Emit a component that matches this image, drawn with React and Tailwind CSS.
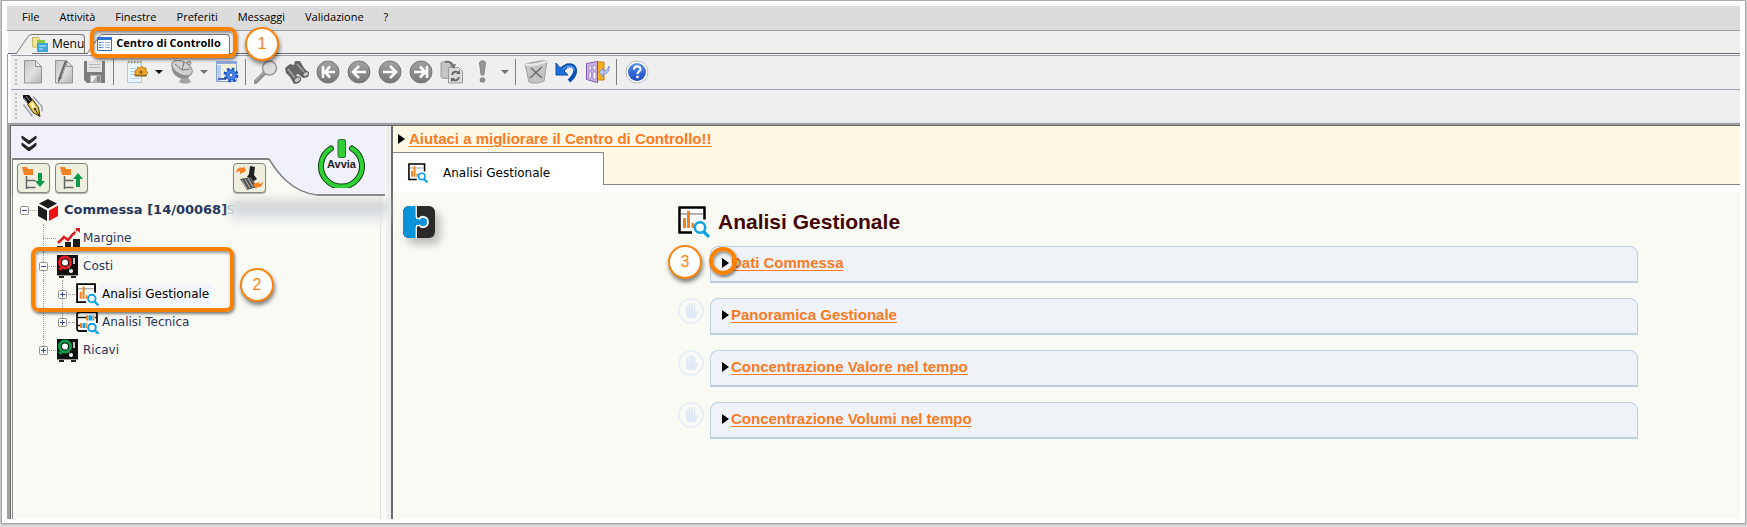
import React from 'react';

const menuItems = ['File', 'Attività', 'Finestre', 'Preferiti', 'Messaggi', 'Validazione', '?'];

const sections = [
    { title: 'Dati Commessa', hand: false },
    { title: 'Panoramica Gestionale', hand: true },
    { title: 'Concentrazione Valore nel tempo', hand: true },
    { title: 'Concentrazione Volumi nel tempo', hand: true }
];

/* ---------- Toolbar icons ---------- */

const GreyDefs = () => (
    <svg width="0" height="0" className="absolute" aria-hidden="true">
        <defs>
            <linearGradient id="greyPage" x1="0" y1="0" x2="1" y2="1">
                <stop offset="0" stopColor="#c2c2c2" />
                <stop offset="0.5" stopColor="#e2e2e2" />
                <stop offset="1" stopColor="#b4b4b4" />
            </linearGradient>
            <linearGradient id="greyBall" x1="0" y1="0" x2="0" y2="1">
                <stop offset="0" stopColor="#a2a2a2" />
                <stop offset="1" stopColor="#777777" />
            </linearGradient>
            <linearGradient id="blueBall" x1="0" y1="0" x2="0" y2="1">
                <stop offset="0" stopColor="#5b8fe8" />
                <stop offset="1" stopColor="#1a49c4" />
            </linearGradient>
        </defs>
    </svg>
);

const NewIcon = () => (
    <svg width="20" height="24" viewBox="0 0 20 24">
        <path d="M1.5 .5h11l6 6v16.500h-17z" fill="url(#greyPage)" stroke="#959595" />
        <path d="M12.500 .5v6h6z" fill="#eee" stroke="#959595" />
    </svg>
);

const EditIcon = () => (
    <svg width="20" height="24" viewBox="0 0 20 24">
        <path d="M1.5 .5h11l6 6v16.500h-17z" fill="url(#greyPage)" stroke="#959595" />
        <path d="M12.500 .5v6h6z" fill="#ddd" stroke="#959595" />
        <path d="M12 1.500 6 18" stroke="#6c6c6c" strokeWidth="3" />
        <path d="M12.500 3 7.500 17" stroke="#b5b5b5" />
        <path d="m4.500 17 3 1-3.500 5z" fill="#666" />
    </svg>
);

const SaveIcon = () => (
    <svg width="22" height="24" viewBox="0 0 22 24">
        <path d="M0 1h21v22H3l-3-3z" fill="#7c7c7c" />
        <path d="M3 1h15v11H3z" fill="#e2e2e2" />
        <path d="M5 4.500h11M5 7.500h11" stroke="#b9b9b9" />
        <path d="M6 15h11v8H6z" fill="#b3b3b3" />
        <path d="M7 16h6l-5 6H7z" fill="#efefef" />
        <path d="M13 16h3v6h-3z" fill="#8c8c8c" />
    </svg>
);

const NoteGearIcon = () => (
    <svg width="22" height="24" viewBox="0 0 22 24">
        <path d="M1.500 2.500h14v20h-14z" fill="#eaf5fd" stroke="#a9cde8" />
        <path d="M4 8.500h6M4 11.500h5M4 14.500h5M4 18.500h9" stroke="#b6d2ea" />
        <path d="M2 2h14" stroke="#a79f78" strokeWidth="2.500" strokeDasharray="1.500 1.500" />
        <path d="m9 11 2-1 1-3 2 1 2-2 1 2 3 0 0 3 2 2-2 1v2H9z" fill="#eda72a" stroke="#c07c15" />
        <circle cx="15" cy="12" r="1.500" fill="#8c5a10" />
        <path d="M9 15.500h12" stroke="#8a6b2c" strokeWidth="1.500" />
    </svg>
);

const DishIcon = () => (
    <svg width="24" height="24" viewBox="0 0 24 24">
        <path d="M12 17h6l3 5c-3 2-9 2-12 0z" fill="#a4a4a4" />
        <path d="M2 4C0 12 7 21 17 18c4-2 6-6 5-9z" fill="#8e8e8e" />
        <ellipse cx="12" cy="8" rx="11" ry="6.500" transform="rotate(28 12 8)" fill="#d0d0d0" stroke="#8b8b8b" />
        <path d="M5 4l7 6 2-8M12 10l8-1" stroke="#777" fill="none" />
        <circle cx="19" cy="3" r="2" fill="#bdbdbd" stroke="#8a8a8a" />
    </svg>
);

const WindowGearIcon = () => (
    <svg width="24" height="24" viewBox="0 0 24 24">
        <path d="M1.500 1.500h20v20h-20z" fill="#f3f0dc" stroke="#8ea4cf" />
        <path d="M1 1h21v3H1z" fill="#90a9dc" />
        <path d="M2 5h4v16H2z" fill="#b7cdf2" />
        <path d="M3 19h8" stroke="#4d6fb5" strokeWidth="2" />
        <circle cx="16" cy="15" r="6" fill="none" stroke="#1c58c9" strokeWidth="3" strokeDasharray="2.600 2.100" />
        <circle cx="16" cy="15" r="5" fill="#4a86ec" stroke="#1c58c9" />
        <circle cx="16" cy="15" r="2" fill="#fff" stroke="#1c58c9" />
    </svg>
);

const SearchIcon = () => (
    <svg width="24" height="24" viewBox="0 0 24 24">
        <path d="m10.500 13-9 9" stroke="#8d8d8d" strokeWidth="4" strokeLinecap="round" />
        <path d="m9.500 13-8 8" stroke="#b9b9b9" />
        <circle cx="15.500" cy="8" r="7" fill="#dedede" stroke="#999" strokeWidth="1.500" />
        <path d="M11 7c1-3 4-4 6-3" stroke="#f6f6f6" strokeWidth="1.500" fill="none" />
    </svg>
);

const BinocularsIcon = () => (
    <svg width="24" height="24" viewBox="0 0 24 24">
        <path d="M0 8 5 4l4 1 1-4 5 0 4 7 5 5-1 4-5 1-5-4-2 1 5 5-2 3-5 1-4-7-4-4z" fill="#666" />
        <path d="m3 9 7 9M12 4l7 8" stroke="#a5a5a5" strokeWidth="1.500" />
        <ellipse cx="12.500" cy="20" rx="3.500" ry="2.500" transform="rotate(-35 12 20)" fill="#c4c4c4" stroke="#5d5d5d" />
        <ellipse cx="20.500" cy="14.500" rx="3" ry="2.300" transform="rotate(-35 20 14)" fill="#c4c4c4" stroke="#5d5d5d" />
    </svg>
);

const BallIcon = ({ children }) => (
    <svg width="24" height="24" viewBox="0 0 24 24">
        <circle cx="12" cy="12" r="11" fill="url(#greyBall)" stroke="#777" />
        <g stroke="#fff" strokeWidth="2.600" fill="none">{children}</g>
    </svg>
);

const PageRefreshIcon = () => (
    <svg width="24" height="24" viewBox="0 0 24 24">
        <path d="M1 3c0-2 9-2 10 0v14c-1 2-9 2-10 0z" fill="#c5c5c5" stroke="#9e9e9e" />
        <path d="M8.500 7.500h10l4 4v11.500h-14z" fill="#dadada" stroke="#9a9a9a" />
        <path d="M5 2c5-1 7 1 8 4" stroke="#747474" strokeWidth="2" fill="none" />
        <path d="m10 5 6-1-2 5z" fill="#747474" />
        <path d="M12 15c1-4 5-4 7-2M19 17c-1 4-5 4-7 2" stroke="#666" strokeWidth="1.800" fill="none" />
        <path d="M20 10v4h-4zM11 22v-4h4z" fill="#666" />
    </svg>
);

const ExclamationIcon = () => (
    <svg width="10" height="24" viewBox="0 0 10 24">
        <path d="M1.500 3c0-3 6-3 6 0L5.800 15H3.200z" fill="#979797" stroke="#858585" />
        <circle cx="4.500" cy="20" r="2.800" fill="#8d8d8d" />
    </svg>
);

const TrashIcon = () => (
    <svg width="24" height="24" viewBox="0 0 24 24">
        <path d="M1 4c6-1 15-4 22-3l-3 20c-4 2-11 3-15 1z" fill="#c5c5c5" stroke="#a0a0a0" />
        <path d="M1 4c6 2 15 0 22-3" stroke="#e8e8e8" strokeWidth="2" fill="none" />
        <path d="m7 8 11 10M18 7 6 18" stroke="#6b6b6b" strokeWidth="1.500" />
    </svg>
);

const UndoIcon = () => (
    <svg width="23" height="24" viewBox="0 0 23 24">
        <path d="M6 10c7-8 15-5 14 2-.4 4-3 6-6 9" stroke="#0b4fae" strokeWidth="4" fill="none" />
        <path d="M1 3v12h12l-4-4 3-3-4-1-3 1z" fill="#1b6fd6" stroke="#0b4fae" />
        <path d="M8 9c5-5 12-3 11 2" stroke="#4f9df0" strokeWidth="1.500" fill="none" />
    </svg>
);

const ExitIcon = () => (
    <svg width="25" height="24" viewBox="0 0 25 24">
        <path d="M11 2h8v18h-8z" fill="#fbb11c" stroke="#c77f15" />
        <path d="m1.500 3.500 11-2v21l-11-3z" fill="#c9b3e6" stroke="#7c58ad" />
        <path d="M4 6h2.500v4H4zM8 5.500h3V10H8zM4 12h2.500v6H4zM8 12h3v7H8z" fill="#fff" stroke="#9a7cc6" strokeWidth=".8" />
        <path d="M24 6c1 5-2 8-6 8v3l-4-5 4-4v3c3 0 5-2 6-5z" fill="#b9c6f5" stroke="#6e83cc" strokeWidth=".8" />
    </svg>
);

const HelpIcon = () => (
    <svg width="24" height="24" viewBox="0 0 24 24">
        <circle cx="12" cy="12" r="11" fill="#fff" stroke="#b8bfcd" />
        <circle cx="12" cy="12" r="9" fill="url(#blueBall)" />
        <path d="M9 9.500c0-4 6.500-4 6.500-.5 0 2.500-3 2.300-3 5" stroke="#fff" strokeWidth="2.200" fill="none" />
        <circle cx="12.500" cy="17" r="1.400" fill="#fff" />
    </svg>
);

const PenIcon = () => (
    <svg width="22" height="24" viewBox="0 0 22 24">
        <path d="m1.500 10.500 9 12M11 2.500l9 10v5" stroke="#98a0b0" strokeWidth="1.500" fill="none" />
        <path d="M1 1h6l4 5-5 4-5-6z" fill="#151515" />
        <path d="m4 2 4 5M2 4l3 4" stroke="#8c8c8c" />
        <path d="m5.500 10.500 5-5 6 8 1.500 9-7-4z" fill="#e6bf45" stroke="#3c2f0a" />
        <path d="m8 10 2.500-2 4 6v3l-3-1z" fill="#fff3b8" />
        <path d="m12.500 14.500 5 7.500" stroke="#3c2f0a" />
        <circle cx="13" cy="15" r="1.300" fill="#3c2f0a" />
    </svg>
);

/* ---------- Toolbar pieces ---------- */

const ToolButton = ({ label, children }) => (
    <button type="button" aria-label={label} className="w-[31px] h-8 flex items-center justify-center">
        {children}
    </button>
);

const Caret = ({ label, active }) => (
    <button type="button" aria-label={label} className="w-3.5 h-8 flex items-center justify-center">
        <svg width="8" height="4" viewBox="0 0 8 4">
            <path d="M0 0h8L4 4z" fill={active ? '#111' : '#707070'} />
        </svg>
    </button>
);

const Separator = () => <span className="w-px h-[26px] ml-[3px] mr-1 bg-[#808080]" />;

const Grip = () => (
    <span className="w-0.5 h-[26px] border-l-2 border-dotted border-[#bdbdbd]" />
);

const BarArrow = ({ d }) => (
    <BallIcon>
        <path d={d} />
    </BallIcon>
);

const Toolbar = () => (
    <div role="toolbar" className="ml-[3px] pl-1 pb-0.5 h-[34px] flex items-center border-t border-[#9a9aa6] bg-[#efefef]">
        <Grip />
        <ToolButton label="Nuovo"><NewIcon /></ToolButton>
        <ToolButton label="Modifica"><EditIcon /></ToolButton>
        <ToolButton label="Salva"><SaveIcon /></ToolButton>
        <Separator />
        <div className="flex ml-[3px]">
            <ToolButton label="Azioni"><NoteGearIcon /></ToolButton>
            <Caret label="Altre azioni" active />
            <ToolButton label="Ricezione"><DishIcon /></ToolButton>
            <Caret label="Altre ricezioni" />
            <ToolButton label="Impostazioni"><WindowGearIcon /></ToolButton>
        </div>
        <Separator />
        <ToolButton label="Cerca"><SearchIcon /></ToolButton>
        <ToolButton label="Trova"><BinocularsIcon /></ToolButton>
        <ToolButton label="Primo"><BarArrow d="M7 6v12M19 12H10M14 6.500 8.800 12l5.200 5.500" /></ToolButton>
        <ToolButton label="Precedente"><BarArrow d="M19 12H7M12 6l-6 6 6 6" /></ToolButton>
        <ToolButton label="Successivo"><BarArrow d="M5 12h12M12 6l6 6-6 6" /></ToolButton>
        <ToolButton label="Ultimo"><BarArrow d="M18 6v12M5 12h10M11 6.500l5.200 5.500-5.200 5.500" /></ToolButton>
        <ToolButton label="Aggiorna"><PageRefreshIcon /></ToolButton>
        <ToolButton label="Avvisi"><ExclamationIcon /></ToolButton>
        <Caret label="Altri avvisi" />
        <Separator />
        <ToolButton label="Elimina"><TrashIcon /></ToolButton>
        <ToolButton label="Annulla"><UndoIcon /></ToolButton>
        <ToolButton label="Esci"><ExitIcon /></ToolButton>
        <Separator />
        <ToolButton label="Aiuto"><HelpIcon /></ToolButton>
    </div>
);

/* ---------- Shared drawings ---------- */

const AnalysisIcon = ({ size }) => (
    <svg width={size} height={size} viewBox="0 0 32 32" className="shrink-0">
        <path d="M1.200 1.200h25v25h-25z" fill="#fff" />
        <path d="M14 26.500H1.500v-25h25v12" fill="none" stroke="#000" strokeWidth="2.500" />
        <path d="M3 8h22" stroke="#999" strokeWidth="1.500" />
        <path d="M5 12h3v10H5zM9 5h3v17H9zM13.500 17h2.500v5h-2.500z" fill="#f58220" />
        <circle cx="22" cy="21.500" r="5.200" fill="#fff" stroke="#0da3e6" strokeWidth="2.600" />
        <path d="m25.500 25.500 5.500 5.500" stroke="#0da3e6" strokeWidth="3.200" />
    </svg>
);

const TechIcon = () => (
    <svg width="23" height="23" viewBox="0 0 23 23" className="shrink-0">
        <path d="M11 20H3c-1 0-2-1-2-2V4c0-2 1-3 3-3h15c1 0 2 1 2 2v9" fill="#fff" stroke="#111" strokeWidth="1.800" />
        <path d="M1 6.500h9M19 6.500h2M1 14.500h3" stroke="#111" strokeWidth="1.500" />
        <path d="M10 4.500h2v5h-2zM17 4.500h1.500v5H17zM4 12h2v5H4zM10 12h1v5h-1z" fill="#f58220" />
        <path d="M12.500 4.500h4v5h-4zM6.500 12h3v5h-3z" fill="#0da3e6" />
        <circle cx="16" cy="16.500" r="3.800" fill="#fff" stroke="#0da3e6" strokeWidth="2" />
        <path d="m18.500 19 4 4" stroke="#0da3e6" strokeWidth="2.400" />
    </svg>
);

const CubeIcon = () => (
    <svg width="20" height="22" viewBox="0 0 20 22" className="shrink-0">
        <path d="m10 0 9 4.500-9 5-9-5z" fill="#1c1c1c" />
        <path d="m0 6.500 9 5V22l-9-5z" fill="#1c1c1c" />
        <path d="m20 6.500-9 5V22l9-5z" fill="#ee1111" />
    </svg>
);

const MarginIcon = () => (
    <svg width="24" height="23" viewBox="0 0 24 23" className="shrink-0">
        <path d="M0 19h6v4H0zM8 15h6v8H8zM16 12h7v11h-7z" fill="#1c1c1c" />
        <path d="m1 16 6-6 4 3 5-6 2-1" fill="none" stroke="#e21b22" strokeWidth="2.600" />
        <path d="m17 6 4-4" stroke="#e21b22" strokeWidth="2" strokeDasharray="2 1" />
        <path d="M18 1h5v5z" fill="#e21b22" />
    </svg>
);

const SafeIcon = ({ color }) => (
    <svg width="21" height="23" viewBox="0 0 21 23" className="shrink-0">
        <path d="M0 0h21v21H0z" fill="#111" />
        <path d="M2 21h5v2H2zM14 21h5v2h-5z" fill="#222" />
        <circle cx="8" cy="7.500" r="5.500" fill="none" stroke={color} strokeWidth="3" />
        <path d="m7 12-6 1 3 3z" fill={color} />
        <circle cx="8" cy="7.500" r="3" fill="#fff" />
        <path d="M17 3v6" stroke="#fff" strokeWidth="1.500" />
        <circle cx="14" cy="16" r="2" fill="#fff" />
        <path d="m10 10 4 5" stroke="#777" />
        <path d="M0 20.500h21" stroke="#999" />
    </svg>
);

const HandIcon = () => (
    <svg width="26" height="26" viewBox="0 0 26 26">
        <circle cx="13" cy="13" r="12" fill="none" stroke="#e8eff6" strokeWidth="2" />
        <path
            d="M8 13V7.500h1.800V12h.6V5.500h2V12h.6V5h2v7h.6V6.500h1.800V15l1.600-2.500 1.600.8-3 7h-7.600L8 17z"
            fill="#e2ebf5"
        />
    </svg>
);

const Triangle = () => (
    <svg width="7" height="10" viewBox="0 0 7 10" className="shrink-0">
        <path d="M0 0l7 5-7 5z" fill="#000" />
    </svg>
);

const PuzzleLogo = () => (
    <svg width="32" height="32" viewBox="0 0 32 32" className="drop-shadow-[5px_6px_4px_rgba(0,0,0,0.25)]">
        <rect width="32" height="32" rx="6" fill="#2b2a29" />
        <path
            d="M13 0v10c0 2 2 4 3.500 2.500 2-3 8.500-2 8.500 3.500s-6.500 6.500-8.500 3.500C15 18 13 20 13 22v10"
            fill="#0a93d8"
            stroke="#fff"
            strokeWidth="1.800"
        />
        <path d="M6 0h6.500v32H6a6 6 0 0 1-6-6V6a6 6 0 0 1 6-6z" fill="#0a93d8" />
        <path d="M11 13h5v6h-5z" fill="#0a93d8" />
    </svg>
);

const StepBadge = ({ number, className }) => (
    <span
        className={`absolute z-20 w-[34px] h-[34px] rounded-full border-2 border-[#f98510] bg-white flex items-center justify-center font-['Liberation_Sans',sans-serif] text-base text-[#f98510] shadow-[1px_3px_4px_rgba(0,0,0,0.5)] ${className}`}
    >
        {number}
    </span>
);

const Highlight = ({ className }) => (
    <span
        className={`absolute z-10 border-4 border-[#fb8200] pointer-events-none shadow-[1px_2px_3px_rgba(0,0,0,0.5),inset_1px_2px_3px_rgba(0,0,0,0.4)] ${className}`}
    />
);

/* ---------- Window tabs ---------- */

const WindowTab = ({ active, icon, children, className }) => (
    <button type="button" className={`h-5 flex items-stretch ${className}`}>
        <svg width="16" height="20" viewBox="0 0 16 20" className="shrink-0">
            <path d="M0 20C5 16 9 4 13 1l3-.5V20z" fill={active ? '#fff' : '#efefef'} />
            <path d="M0 20 12 2.500Q13.500 .5 16 .5" fill="none" stroke="#777" />
        </svg>
        <span className={`flex items-center gap-1 pb-0.5 border-t border-r border-[#777] rounded-tr-sm ${active ? 'bg-white text-[11px] font-bold pr-2' : 'text-xs'}`}>
            {icon}
            {children}
        </span>
    </button>
);

const MenuTabIcon = () => (
    <svg width="16" height="16" viewBox="0 0 16 16">
        <path d="M.5 1.500h6l1 1.500v8h-7z" fill="#f1e3a0" stroke="#c5b660" />
        <path d="M5 4h8v6H5z" fill="#8cc63f" />
        <path d="M5 7h11v9H5z" fill="#3ba5d8" />
        <path d="M7 10h7M7 13h4" stroke="#d6effa" />
    </svg>
);

const ListTabIcon = () => (
    <svg width="15" height="14" viewBox="0 0 15 14" className="-ml-1.5 self-center">
        <path d="M.5 .5h14v13H.5z" fill="#fff" stroke="#2a74d4" />
        <path d="M0 0h15v3H0z" fill="#2a74d4" />
        <path d="M2 5.500h2M2 8h2M2 10.500h2M8.500 5.500h1M8.500 8h1M8.500 10.500h1" stroke="#2a74d4" />
        <path d="M4 5.500h3M4 8h3M4 10.500h3M10 5.500h3M10 8h3M10 10.500h3" stroke="#7db0ee" />
    </svg>
);

/* ---------- Tree ---------- */

const Expander = ({ sign }) => (
    <svg width="9" height="9" viewBox="0 0 9 9" className="absolute left-0 top-[10px]">
        <rect x=".5" y=".5" width="8" height="8" rx="1" fill="#fff" stroke="#919191" />
        <path d={sign === 'plus' ? 'M2 4.500h5M4.500 2v5' : 'M2 4.500h5'} stroke="#31479c" />
    </svg>
);

const Branch = ({ line, sign, arm = true }) => (
    <span className="relative w-[19px] h-7 shrink-0">
        {line === 'full' && <span className="absolute left-1 top-0 h-7 border-l border-dotted border-[#9a9a9a]" />}
        {line === 'half' && <span className="absolute left-1 top-0 h-3.5 border-l border-dotted border-[#9a9a9a]" />}
        {arm && <span className="absolute left-1 top-3.5 w-[13px] border-t border-dotted border-[#9a9a9a]" />}
        {sign && <Expander sign={sign} />}
    </span>
);

const TreeRow = ({ branches, icon, children }) => (
    <li className="h-7 flex items-center">
        {branches}
        <span className="-ml-px shrink-0">{icon}</span>
        {children}
    </li>
);

const Spacer = () => <span className="w-[19px] shrink-0" />;

const Tree = () => (
    <div className="relative pl-[7px]">
        <ul className="font-['DejaVu_Sans',sans-serif] text-xs text-[#26365c]">
            <TreeRow branches={<Branch sign="minus" />} icon={<CubeIcon />}>
                <a href="#commessa" className="ml-1.5 text-[13px] font-bold whitespace-nowrap">Commessa [14/00068]</a>
                <span className="-mr-1 text-[#9aa7b5]">S</span>
                <span className="flex-1 h-5 -mr-2 bg-gradient-to-b from-[#c9cdce] to-[#e6e9ec] blur-[5px]" />
            </TreeRow>
            <TreeRow branches={<><Spacer /><Branch line="full" /></>} icon={<MarginIcon />}>
                <a href="#margine" className="ml-0.5">Margine</a>
            </TreeRow>
            <TreeRow branches={<><Spacer /><Branch line="full" sign="minus" /></>} icon={<SafeIcon color="#e21b22" />}>
                <a href="#costi" className="ml-[5px]">Costi</a>
            </TreeRow>
            <TreeRow
                branches={<><Spacer /><Branch line="full" arm={false} /><Branch line="full" sign="plus" /></>}
                icon={<AnalysisIcon size={23} />}
            >
                <a href="#gestionale" className="ml-px px-0.5 py-0.5 bg-[#f1f5fb] text-black">Analisi Gestionale</a>
            </TreeRow>
            <TreeRow
                branches={<><Spacer /><Branch line="full" arm={false} /><Branch line="half" sign="plus" /></>}
                icon={<TechIcon />}
            >
                <a href="#tecnica" className="ml-[3px]">Analisi Tecnica</a>
            </TreeRow>
            <TreeRow branches={<><Spacer /><Branch line="half" sign="plus" /></>} icon={<SafeIcon color="#0c9a48" />}>
                <a href="#ricavi" className="ml-[5px]">Ricavi</a>
            </TreeRow>
        </ul>
        <Highlight className="left-[18px] top-[51px] w-[203px] h-[65px] rounded-lg" />
        <StepBadge number="2" className="left-[227px] top-[72px]" />
    </div>
);

const TreeButton = ({ label, children, className = '' }) => (
    <button
        type="button"
        aria-label={label}
        className={`w-[33px] h-[30px] flex items-center justify-center rounded border border-[#85857c] bg-[#eeefde] shadow-[0_1px_1px_rgba(0,0,0,0.3)] ${className}`}
    >
        {children}
    </button>
);

const FolderTree = ({ arrow }) => (
    <svg width="25" height="25" viewBox="0 0 25 25">
        <path d="M1 1h5l1 2h5v6H3z" fill="#f58220" />
        <path d="M5.500 10v13M5.500 14.500h9M5.500 21.500h9" stroke="#666" strokeWidth="1.500" />
        <path d={arrow} fill="#0c9a48" />
    </svg>
);

const LeftPanel = () => (
    <aside className="w-[374px] shrink-0 flex flex-col bg-[#f9faf4]">
        <div className="relative bg-[#f1f1fb]">
            <div className="h-8 flex items-center pl-2.5 pt-0.5">
                <button type="button" aria-label="Comprimi">
                    <svg width="16" height="16" viewBox="0 0 16 16">
                        <path d="m1 1 7 5 7-5v2.500L8 9 1 3.500zM1 8l7 5 7-5v2.500L8 16l-7-5.500z" fill="#222" stroke="#222" />
                    </svg>
                </button>
            </div>
            <div className="flex h-[38px] pl-px">
                <div className="w-[257px] pt-[3px] pl-1 flex gap-[5px] border-t-2 border-l border-[#808080] bg-[#f9faf4]">
                    <TreeButton label="Espandi"><FolderTree arrow="M17 7h4v8h3l-5 6-5-6h3z" /></TreeButton>
                    <TreeButton label="Riduci"><FolderTree arrow="M17 21h4v-8h3l-5-6-5 6h3z" /></TreeButton>
                    <TreeButton label="Pulisci" className="ml-auto mr-[3px]">
                        <svg width="29" height="26" viewBox="0 0 29 26">
                            <path d="m15 1 5 1-1 8 3 4-3 2-7-4 2-3z" fill="#1f1f1f" />
                            <path d="m5 14 11-2 6 10-10 3z" fill="#555" />
                            <path d="m7 15 5 9M10 14l5 9M13 13l5 9" stroke="#bbb" />
                            <path d="M1 8c1-6 5-6 7-5l1-2 2 5-6 3V6C3 6 2 7 1 8z" fill="#f58220" />
                            <path d="M28 16c0 6-4 7-6 6l-1 2-3-5 6-2v2c2 0 3-1 4-3z" fill="#f58220" />
                        </svg>
                    </TreeButton>
                </div>
                <svg width="48" height="38" viewBox="0 0 48 38" className="shrink-0">
                    <path d="M0 1C8 14 22 34 48 37v1H0z" fill="#f9faf4" />
                    <path d="M0 1C8 14 22 34 48 37" fill="none" stroke="#808080" strokeWidth="1.500" />
                </svg>
                <div className="flex-1 border-b-2 border-[#808080]" />
            </div>
            <button type="button" className="absolute right-5 top-3 w-[47px] h-[50px]">
                <svg width="47" height="50" viewBox="0 0 47 50" className="absolute inset-0">
                    <path d="M13 10.500a20.500 20.500 0 1 0 21 0" fill="none" stroke="#123f14" strokeWidth="6" strokeLinecap="round" />
                    <path d="M13 10.500a20.500 20.500 0 1 0 21 0" fill="none" stroke="#2fd035" strokeWidth="4" strokeLinecap="round" />
                    <rect x="20" y="1.500" width="7.500" height="18" rx="1.500" fill="#2fd035" stroke="#3b6b3c" />
                </svg>
                <span className="relative block pt-0.5 text-center font-['Liberation_Sans',sans-serif] text-[11px] font-bold text-[#222]">
                    Avvia
                </span>
            </button>
        </div>
        <div className="flex-1 ml-px mr-1 border-x border-[#8a8a8a] border-r-[#e2e2e2]">
            <Tree />
        </div>
    </aside>
);

/* ---------- Main area ---------- */

const linkClass = "font-['Liberation_Sans',sans-serif] text-[15px] leading-5 font-bold text-[#fb7a24] underline underline-offset-2";

const MainPanel = () => (
    <main className="flex-1 min-w-0 flex flex-col border-l-2 border-[#6b6b6b] bg-[#f9faf4]">
        <div className="bg-[#fff8e5]">
            <div className="h-[26px] flex items-center gap-1 pl-[5px]">
                <Triangle />
                <a href="#feedback" className={linkClass}>Aiutaci a migliorare il Centro di Controllo!!</a>
            </div>
            <div className="flex">
                <button
                    type="button"
                    className="w-[211px] h-[33px] flex items-center gap-[15px] pl-[15px] pt-2 border-t border-r border-[#85858d] bg-white font-['DejaVu_Sans',sans-serif] text-xs text-black"
                >
                    <AnalysisIcon size={20} />
                    Analisi Gestionale
                </button>
                <div className="flex-1 border-b border-[#85858d]" />
            </div>
        </div>
        <div className="h-[7px] bg-white" />

        <div className="flex items-start pt-3.5 pl-2.5 pr-[102px]">
            <PuzzleLogo />
            <section className="flex-1 ml-[243px]">
                <h1 className="flex items-center gap-2 h-8 font-['Liberation_Sans',sans-serif] text-[21px] font-bold text-[#420404]">
                    <AnalysisIcon size={32} />
                    Analisi Gestionale
                </h1>
                <ul className="mt-2 flex flex-col gap-[15px]">
                    {sections.map((section) => (
                        <li key={section.title} className="relative flex">
                            <div className="w-8 shrink-0">{section.hand && <HandIcon />}</div>
                            <div className="flex-1 bg-white">
                                <div className="h-[37px] flex items-center gap-0.5 pl-[11px] pb-0.5 rounded-t-lg border border-b-2 border-[#bdcfde] bg-[#eff3f7]">
                                    <Triangle />
                                    <a href="#sezione" className={linkClass}>{section.title}</a>
                                </div>
                            </div>
                            {!section.hand && (
                                <>
                                    <StepBadge number="3" className="-left-2.5 -top-px" />
                                    <Highlight className="left-[31px] top-px w-7 h-7 rounded-full" />
                                </>
                            )}
                        </li>
                    ))}
                </ul>
            </section>
        </div>
    </main>
);

export default function App() {
    return (
        <div className="min-h-screen flex flex-col pt-px pl-0.5 pr-0.5 pb-1 bg-[#dedede] font-['Open_Sans','Noto_Sans',sans-serif]">
            <GreyDefs />
            <div className="flex-1 flex flex-col p-[5px] pb-1 bg-white shadow-[0_0_2px_1px_rgba(0,0,0,0.35)]">
                {/* Menu bar */}
                <nav className="h-[25px] flex items-center gap-5 pl-[15px] pb-px border-b border-[#a0a0a0] bg-[#dcdcdc] text-[11px] text-black">
                    {menuItems.map((item) => (
                        <button type="button" key={item}>{item}</button>
                    ))}
                </nav>

                {/* Window tabs */}
                <div className="relative h-[23px] ml-px pt-[3px] pl-2 flex border-b border-[#696969] bg-[#efefef] text-black">
                    <WindowTab icon={<MenuTabIcon />}>Menu</WindowTab>
                    <WindowTab active icon={<ListTabIcon />} className="ml-0.5">Centro di Controllo</WindowTab>
                    <Highlight className="left-[82px] -top-1 w-[147px] h-[31px] rounded-lg" />
                    <StepBadge number="1" className="left-[237px] -top-1" />
                </div>

                {/* Toolbars */}
                <div className="pt-px border-l border-[#a0a0a0] bg-[#f8f8fd]">
                    <Toolbar />
                    <div role="toolbar" className="ml-[3px] pl-1 h-[34px] flex items-center border-t border-[#9a9eb0] border-b border-b-[#dde3f2] bg-[#efefef]">
                        <Grip />
                        <ToolButton label="Firma"><PenIcon /></ToolButton>
                    </div>
                </div>

                {/* Body */}
                <div className="flex-1 flex border-t-2 border-l-[3px] border-[#a0a0a0] bg-[#efefef]">
                    <div className="flex-1 min-w-0 flex border-t border-l border-[#696969]">
                        <LeftPanel />
                        <div className="w-1.5 shrink-0 border-l border-white" />
                        <MainPanel />
                    </div>
                </div>
            </div>
        </div>
    );
}
